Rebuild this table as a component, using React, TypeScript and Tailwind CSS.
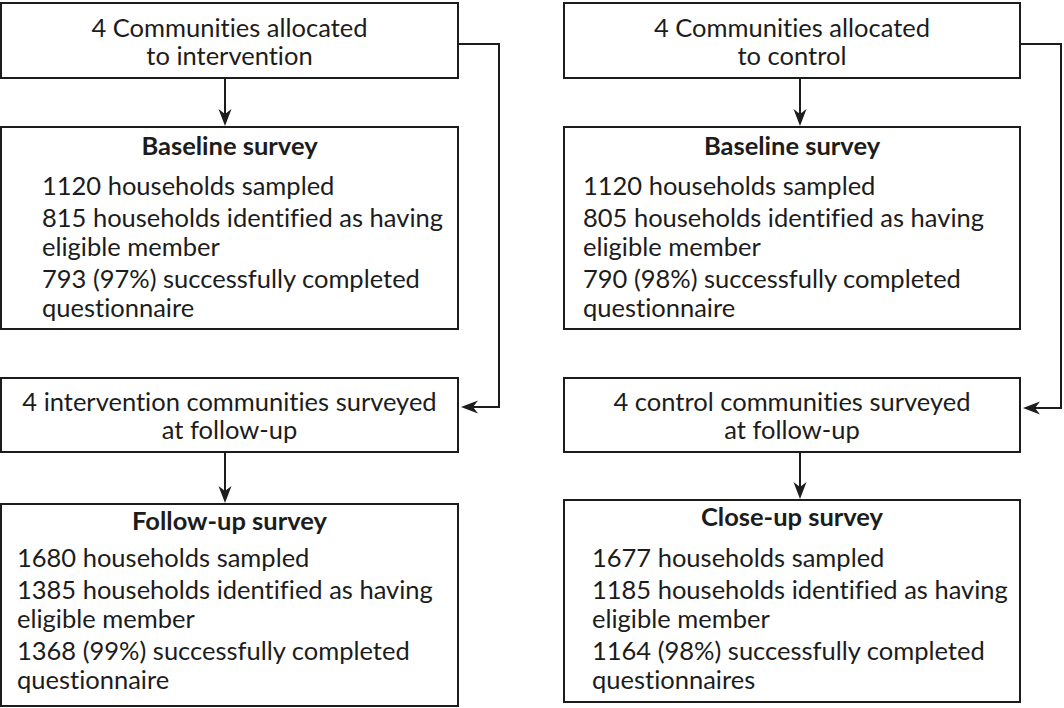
import React from 'react';

const ink = '#1c1c1c';

type Item = string[];

const TitleBox: React.FC<{ lines: string[]; className?: string }> = ({ lines, className = '' }) => (
  <div className={`flex flex-col items-center justify-center border-2 border-[#1c1c1c] text-center ${className}`}>
    {lines.map((l) => (
      <div key={l} className="whitespace-nowrap leading-[28px]">
        {l}
      </div>
    ))}
  </div>
);

const SurveyBox: React.FC<{ title: string; items: Item[]; className?: string; listClass?: string }> = ({
  title,
  items,
  className = '',
  listClass = '',
}) => (
  <div className={`border-2 border-[#1c1c1c] ${className}`}>
    <div className="text-center font-bold leading-[28px]">{title}</div>
    <div className={listClass}>
      {items.map((item, i) => (
        <div key={i} className="mb-[3px]">
          {item.map((l) => (
            <div key={l} className="whitespace-nowrap leading-[29px]">
              {l}
            </div>
          ))}
        </div>
      ))}
    </div>
  </div>
);

// arrowhead pointing down, tip at (x, y)
const downHead = (x: number, y: number) => `M${x} ${y} L${x - 6.5} ${y - 17} L${x} ${y - 12} L${x + 6.5} ${y - 17} Z`;
// arrowhead pointing left, tip at (x, y)
const leftHead = (x: number, y: number) => `M${x} ${y} L${x + 17} ${y - 6.5} L${x + 12} ${y} L${x + 17} ${y + 6.5} Z`;

const Connectors = () => (
  <svg className="pointer-events-none absolute inset-0" width={1064} height={708} viewBox="0 0 1064 708">
    <g stroke={ink} strokeWidth={2} fill="none">
      <path d="M225 79 V114" />
      <path d="M225 453 V491" />
      <path d="M800 79 V114" />
      <path d="M800 453 V487" />
      <path d="M459 44 H499 V407 H472" />
      <path d="M1021 44 H1061 V408 H1034" />
    </g>
    <g fill={ink}>
      <path d={downHead(225, 126)} />
      <path d={downHead(225, 503)} />
      <path d={downHead(800, 126)} />
      <path d={downHead(800, 499)} />
      <path d={leftHead(461, 407)} />
      <path d={leftHead(1023, 408)} />
    </g>
  </svg>
);

export default function App() {
  return (
    <div
      className="relative h-[708px] w-[1064px] overflow-hidden bg-white text-[25.5px] text-[#1c1c1c] [font-variant-ligatures:none]"
      style={{ fontFamily: 'Lato, "Liberation Sans", sans-serif' }}
    >
      <div className="flex pt-[2px]">
        {/* intervention arm */}
        <div className="flex w-[459px] flex-col">
          <TitleBox className="h-[77px]" lines={['4 Communities allocated', 'to intervention']} />
          <SurveyBox
            className="mt-[47px] h-[204px] pt-[3px]"
            listClass="mt-[12px] pl-[40px]"
            title="Baseline survey"
            items={[
              ['1120 households sampled'],
              ['815 households identified as having', 'eligible member'],
              ['793 (97%) successfully completed', 'questionnaire'],
            ]}
          />
          <TitleBox
            className="mt-[47px] h-[76px]"
            lines={['4 intervention communities surveyed', 'at follow-up']}
          />
          <SurveyBox
            className="mt-[50px] h-[204px] pt-[1px]"
            listClass="mt-[9px] pl-[15px]"
            title="Follow-up survey"
            items={[
              ['1680 households sampled'],
              ['1385 households identified as having', 'eligible member'],
              ['1368 (99%) successfully completed', 'questionnaire'],
            ]}
          />
        </div>

        {/* control arm */}
        <div className="ml-[104px] flex w-[458px] flex-col">
          <TitleBox className="h-[77px]" lines={['4 Communities allocated', 'to control']} />
          <SurveyBox
            className="mt-[47px] h-[204px] pt-[3px]"
            listClass="mt-[12px] pl-[18px]"
            title="Baseline survey"
            items={[
              ['1120 households sampled'],
              ['805 households identified as having', 'eligible member'],
              ['790 (98%) successfully completed', 'questionnaire'],
            ]}
          />
          <TitleBox className="mt-[47px] h-[76px]" lines={['4 control communities surveyed', 'at follow-up']} />
          <SurveyBox
            className="mt-[46px] h-[204px] pt-[1px]"
            listClass="mt-[13px] pl-[27px]"
            title="Close-up survey"
            items={[
              ['1677 households sampled'],
              ['1185 households identified as having', 'eligible member'],
              ['1164 (98%) successfully completed', 'questionnaires'],
            ]}
          />
        </div>
      </div>
      <Connectors />
    </div>
  );
}
